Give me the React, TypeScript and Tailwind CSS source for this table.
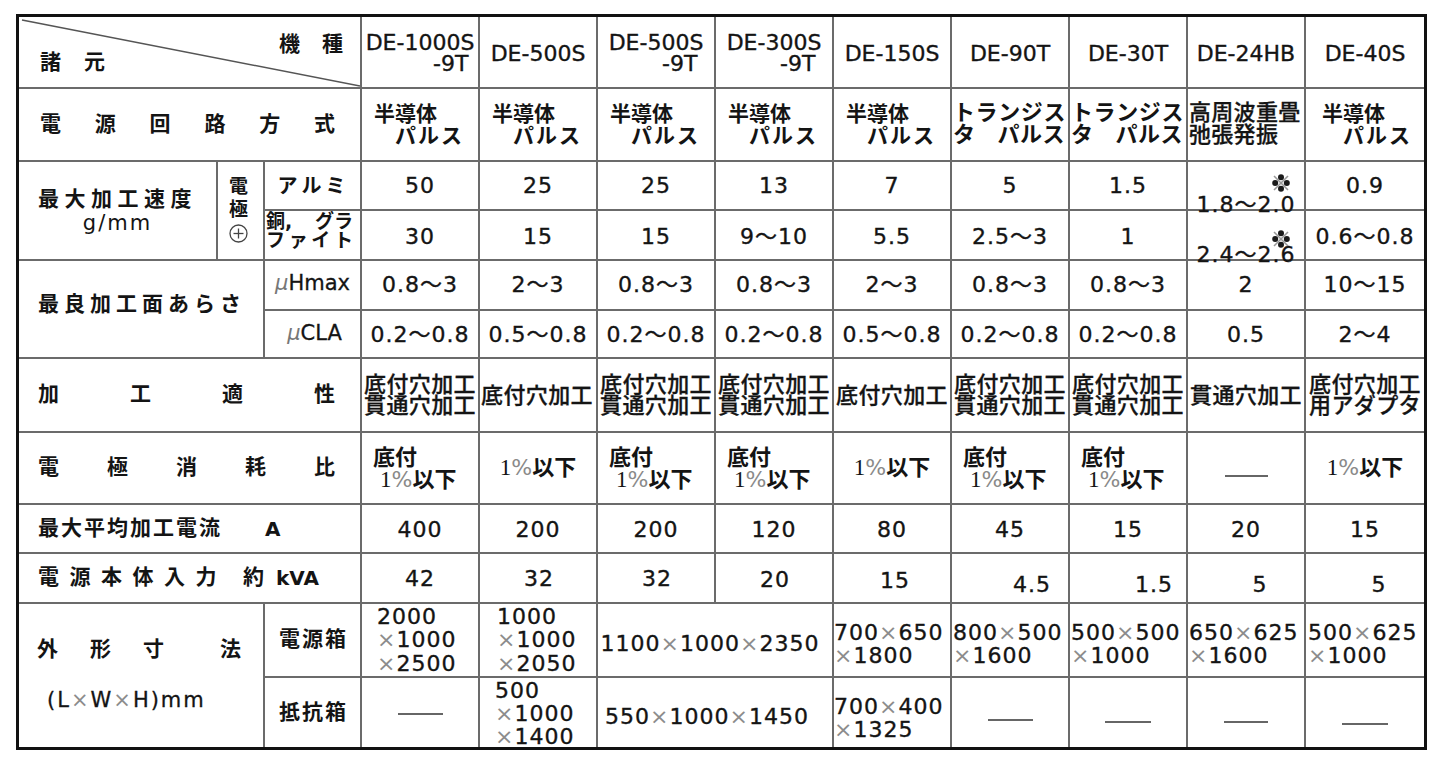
import React from "react";

type CP = { children?: React.ReactNode; layout?: string; r?: boolean; b?: boolean };
function C({ children, layout = "flex items-center justify-center", r = true, b = true }: CP) {
  return (
    <div className={`${r ? "border-r-2" : ""} ${b ? "border-b-2" : ""} border-[#6b6b6b] min-w-0 ${layout}`}>
      {children}
    </div>
  );
}

function X({ s }: { s: string }) {
  const parts = s.split("×");
  return (
    <>
      {parts.map((p, i) => (
        <React.Fragment key={i}>
          {i > 0 && <span className="text-[#8c8c8c] [-webkit-text-stroke:0px]">×</span>}
          {p}
        </React.Fragment>
      ))}
    </>
  );
}

const NUM = "text-[22px] tracking-[1px] leading-[24px] [-webkit-text-stroke:0.35px_#141414]";

function Semi({ pl = "pl-[12px]" }: { pl?: string }) {
  return (
    <div className={`w-full flex flex-col ${pl} font-bold text-[21px] leading-[22px]`}>
      <span>半導体</span>
      <span className="pl-[21px] tracking-[2px]">パルス</span>
    </div>
  );
}

function Trans() {
  return (
    <div className="w-full flex flex-col px-[1px] font-bold text-[22px] leading-[22px] pb-[2px] whitespace-nowrap">
      <span className="tracking-[0.6px]">トランジス</span>
      <span className="flex justify-between pr-[2px]">
        <span>タ</span>
        <span className="tracking-[0.5px]">パルス</span>
      </span>
    </div>
  );
}

function Hf() {
  return (
    <div className="w-full flex flex-col pl-[1px] font-medium text-[22px] leading-[22px] pb-[2px] whitespace-nowrap [-webkit-text-stroke:0.3px_#141414]">
      <span className="tracking-[0.3px]">高周波重畳</span>
      <span className="tracking-[0.3px]">弛張発振</span>
    </div>
  );
}

function Pct() {
  return (
    <span className="font-bold text-[22px] whitespace-nowrap">
      <span className="[font-family:'Liberation_Serif',serif] font-normal text-[23px]">1</span>
      <span className="text-[#8a8a8a] font-normal">%</span>
      以下
    </span>
  );
}

function Pct2() {
  return (
    <div className="w-full flex flex-col pl-[11px] leading-[22px] pt-[4px]">
      <span className="font-bold text-[22px]">底付</span>
      <span className="pl-[7px]">
        <Pct />
      </span>
    </div>
  );
}

function Dash({ w = 45, mt = 0 }: { w?: number; mt?: number }) {
  return <div className="h-[2px] bg-[#666]" style={{ width: w, marginTop: mt }} />;
}

function Mach({ lines }: { lines: string[] }) {
  return (
    <div className="flex flex-col items-center font-medium text-[22px] leading-[21px] tracking-[0.4px] whitespace-nowrap [-webkit-text-stroke:0.3px_#141414]">
      {lines.map((l, i) => (
        <span key={i}>{l}</span>
      ))}
    </div>
  );
}

function Circle() {
  return (
    <svg width="21" height="21" viewBox="0 0 21 21">
      <circle cx="10.5" cy="10.5" r="8.5" fill="none" stroke="#444" strokeWidth="1.3" />
      <line x1="10.5" y1="5.5" x2="10.5" y2="15.5" stroke="#444" strokeWidth="1.3" />
      <line x1="5.5" y1="10.5" x2="15.5" y2="10.5" stroke="#444" strokeWidth="1.3" />
    </svg>
  );
}

function Kome() {
  return (
    <svg width="20" height="20" viewBox="0 0 20 20">
      <line x1="3" y1="3" x2="17" y2="17" stroke="#999" strokeWidth="1.6" />
      <line x1="17" y1="3" x2="3" y2="17" stroke="#999" strokeWidth="1.6" />
      <circle cx="10" cy="4.2" r="3" fill="#1a1a1a" />
      <circle cx="10" cy="15.8" r="3" fill="#1a1a1a" />
      <circle cx="4.2" cy="10" r="3" fill="#1a1a1a" />
      <circle cx="15.8" cy="10" r="3" fill="#1a1a1a" />
    </svg>
  );
}

const models: string[][] = [
  ["DE-1000S", "-9T"],
  ["DE-500S"],
  ["DE-500S", "-9T"],
  ["DE-300S", "-9T"],
  ["DE-150S"],
  ["DE-90T"],
  ["DE-30T"],
  ["DE-24HB"],
  ["DE-40S"],
];

const alum = ["50", "25", "25", "13", "7", "5", "1.5", "HB1", "0.9"];
const copper = ["30", "15", "15", "9〜10", "5.5", "2.5〜3", "1", "HB2", "0.6〜0.8"];
const hmax = ["0.8〜3", "2〜3", "0.8〜3", "0.8〜3", "2〜3", "0.8〜3", "0.8〜3", "2", "10〜15"];
const cla = ["0.2〜0.8", "0.5〜0.8", "0.2〜0.8", "0.2〜0.8", "0.5〜0.8", "0.2〜0.8", "0.2〜0.8", "0.5", "2〜4"];
const current = ["400", "200", "200", "120", "80", "45", "15", "20", "15"];
const power: { v: string; pl: number; pt: number }[] = [
  { v: "42", pl: 0, pt: 2 },
  { v: "32", pl: 2, pt: 2 },
  { v: "32", pl: 2, pt: 2 },
  { v: "20", pl: 2, pt: 4 },
  { v: "15", pl: 6, pt: 6 },
  { v: "4.5", pl: 44, pt: 14 },
  { v: "1.5", pl: 52, pt: 14 },
  { v: "5", pl: 28, pt: 14 },
  { v: "5", pl: 28, pt: 14 },
];

function Spread({ text, pl, pr }: { text: string; pl: string; pr: string }) {
  return (
    <div className={`w-full flex items-center justify-between font-bold text-[21px] ${pl} ${pr}`}>
      {text.split("").map((c, i) => (
        <span key={i}>{c}</span>
      ))}
    </div>
  );
}

function HB({ v, top }: { v: string; top: string }) {
  return (
    <div className="relative w-full h-full flex flex-col items-center justify-end">
      <span className={`absolute right-[13px] ${top} flex`}>
        <Kome />
      </span>
      <span className={`${NUM} translate-y-[8px] whitespace-nowrap`}>{v}</span>
    </div>
  );
}

function Dim({ lines, pl = "pl-0", pt = "pt-0", lh = "leading-[23px]" }: { lines: string[]; pl?: string; pt?: string; lh?: string }) {
  return (
    <div
      className={`w-full h-full flex flex-col justify-center ${pl} ${pt} text-[22px] tracking-[1px] ${lh} whitespace-nowrap [-webkit-text-stroke:0.35px_#141414]`}
    >
      {lines.map((l, i) => (
        <span key={i}>
          <X s={l} />
        </span>
      ))}
    </div>
  );
}

export default function App() {
  return (
    <div className="w-[1444px] h-[758px] bg-white [font-family:'DejaVu_Sans','Noto_Sans_CJK_JP',sans-serif] text-[#141414] overflow-hidden">
      <div className="ml-[16px] mt-[14px] w-fit border-[3px] border-[#111]">
        <div className="grid grid-cols-[199px_47px_97px_repeat(9,118px)] grid-rows-[72px_73px_49px_50px_50px_48px_74px_72px_49px_50px_74px_69px]">
          {/* Row 1: header */}
          <C layout="relative col-span-3 flex flex-col">
            <svg className="absolute left-0 top-0" width="341" height="70" viewBox="0 0 341 70">
              <line x1="3" y1="3" x2="341" y2="69" stroke="#555" strokeWidth="1.6" />
            </svg>
            <div className="relative flex flex-col pt-[16px] font-bold text-[21px] leading-[22px]">
              <div className="self-end pr-[17px]">
                機<span className="ml-[22px]">種</span>
              </div>
              <div className="self-start pl-[21px] -mt-[4px]">
                諸<span className="ml-[23px]">元</span>
              </div>
            </div>
          </C>
          {models.map((m, i) => (
            <C key={i} r={i < 8} layout="flex items-center justify-center pt-[2px]">
              <div className="flex flex-col items-end text-[22px] leading-[21px] whitespace-nowrap [-webkit-text-stroke:0.35px_#141414]">
                <span>{m[0]}</span>
                {m[1] && <span className="pr-[6px]">{m[1]}</span>}
              </div>
            </C>
          ))}

          {/* Row 2 */}
          <C layout="col-span-3 flex items-center">
            <Spread text="電源回路方式" pl="pl-[21px]" pr="pr-[25px]" />
          </C>
          {[0, 1, 2, 3, 4].map((i) => (
            <C key={i} layout="flex items-center">
              <Semi />
            </C>
          ))}
          <C layout="flex items-center">
            <Trans />
          </C>
          <C layout="flex items-center">
            <Trans />
          </C>
          <C layout="flex items-center">
            <Hf />
          </C>
          <C r={false} layout="flex items-center">
            <Semi pl="pl-[16px]" />
          </C>

          {/* Row 3 */}
          <C layout="row-span-2 flex flex-col items-center justify-center">
            <span className="font-bold text-[21px] tracking-[5.5px] leading-[24px] whitespace-nowrap">最大加工速度</span>
            <span className="text-[21px] tracking-[2px] leading-[24px]">g/mm</span>
          </C>
          <C layout="row-span-2 flex flex-col items-center justify-center font-bold text-[19px] leading-[23px] pr-[4px]">
            <span>電</span>
            <span>極</span>
            <span className="h-[25px] flex items-center">
              <Circle />
            </span>
          </C>
          <C layout="flex items-center justify-center pl-[2px] font-bold text-[20px] tracking-[4px]">アルミ</C>
          {alum.map((v, i) => (
            <C key={i} r={i < 8} layout="flex items-center justify-center">
              {v === "HB1" ? <HB v="1.8〜2.0" top="top-[11px]" /> : <span className={NUM}>{v}</span>}
            </C>
          ))}

          {/* Row 4 */}
          <C layout="flex flex-col justify-start pt-[1px] pl-[1px] pr-[7px] font-bold text-[19px] leading-[19px]">
            <span className="flex justify-between">
              <span>銅,</span>
              <span>グラ</span>
            </span>
            <span className="flex justify-between">
              <span>フ</span>
              <span>ァ</span>
              <span>イ</span>
              <span>ト</span>
            </span>
          </C>
          {copper.map((v, i) => (
            <C key={i} r={i < 8} layout="flex items-center justify-center pt-[4px]">
              {v === "HB2" ? <HB v="2.4〜2.6" top="top-[14px]" /> : <span className={NUM}>{v}</span>}
            </C>
          ))}

          {/* Row 5 */}
          <C layout="row-span-2 col-span-2 flex items-center pl-[19px] pb-[8px] font-bold text-[21px] tracking-[5px] whitespace-nowrap">
            最良加工面あらさ
          </C>
          <C layout="flex items-center justify-center text-[21px] pb-[2px] [-webkit-text-stroke:0.3px_#141414]">
            <span className="italic text-[#777] [-webkit-text-stroke:0px]">μ</span>Hmax
          </C>
          {hmax.map((v, i) => (
            <C key={i} r={i < 8} layout="flex items-center justify-center">
              <span className={NUM}>{v}</span>
            </C>
          ))}

          {/* Row 6 */}
          <C layout="flex items-center justify-center text-[21px] pl-[4px] [-webkit-text-stroke:0.3px_#141414]">
            <span className="italic text-[#777] [-webkit-text-stroke:0px]">μ</span>CLA
          </C>
          {cla.map((v, i) => (
            <C key={i} r={i < 8} layout="flex items-center justify-center pt-[2px]">
              <span className={`${NUM} whitespace-nowrap`}>{v}</span>
            </C>
          ))}

          {/* Row 7 */}
          <C layout="col-span-3 flex items-center">
            <Spread text="加工適性" pl="pl-[19px]" pr="pr-[25px]" />
          </C>
          <C layout="flex items-center justify-center">
            <Mach lines={["底付穴加工", "貫通穴加工"]} />
          </C>
          <C layout="flex items-center justify-start pl-[1px]">
            <Mach lines={["底付穴加工"]} />
          </C>
          <C layout="flex items-center justify-center">
            <Mach lines={["底付穴加工", "貫通穴加工"]} />
          </C>
          <C layout="flex items-center justify-center">
            <Mach lines={["底付穴加工", "貫通穴加工"]} />
          </C>
          <C layout="flex items-center justify-center">
            <Mach lines={["底付穴加工"]} />
          </C>
          <C layout="flex items-center justify-center">
            <Mach lines={["底付穴加工", "貫通穴加工"]} />
          </C>
          <C layout="flex items-center justify-center">
            <Mach lines={["底付穴加工", "貫通穴加工"]} />
          </C>
          <C layout="flex items-center justify-center">
            <Mach lines={["貫通穴加工"]} />
          </C>
          <C r={false} layout="flex items-center justify-center">
            <Mach lines={["底付穴加工", "用アダプタ"]} />
          </C>

          {/* Row 8 */}
          <C layout="col-span-3 flex items-center">
            <Spread text="電極消耗比" pl="pl-[19px]" pr="pr-[25px]" />
          </C>
          <C layout="flex items-center">
            <Pct2 />
          </C>
          <C layout="flex items-center justify-center">
            <Pct />
          </C>
          <C layout="flex items-center">
            <Pct2 />
          </C>
          <C layout="flex items-center">
            <Pct2 />
          </C>
          <C layout="flex items-center justify-center">
            <Pct />
          </C>
          <C layout="flex items-center">
            <Pct2 />
          </C>
          <C layout="flex items-center">
            <Pct2 />
          </C>
          <C layout="flex items-center justify-center pt-[16px]">
            <Dash w={43} />
          </C>
          <C r={false} layout="flex items-center justify-center">
            <Pct />
          </C>

          {/* Row 9 */}
          <C layout="col-span-3 flex items-center pl-[19px] font-bold text-[21px]">
            <span className="tracking-[2px] whitespace-nowrap">最大平均加工電流</span>
            <span className="ml-[43px] text-[20px]">A</span>
          </C>
          {current.map((v, i) => (
            <C key={i} r={i < 8} layout="flex items-center justify-center pt-[2px]">
              <span className={NUM}>{v}</span>
            </C>
          ))}

          {/* Row 10 */}
          <C layout="col-span-3 flex items-center pl-[19px] font-bold text-[21px]">
            <span className="tracking-[10.5px] whitespace-nowrap">電源本体入力</span>
            <span className="ml-[16px]">約</span>
            <span className="ml-[12px] text-[20px]">kVA</span>
          </C>
          {power.map((p, i) => (
            <C key={i} r={i < 8} layout="flex items-center justify-center">
              <span className={NUM} style={{ paddingLeft: p.pl, paddingTop: p.pt }}>
                {p.v}
              </span>
            </C>
          ))}

          {/* Row 11 */}
          <C b={false} layout="row-span-2 col-span-2 flex flex-col justify-center gap-[27px] pb-[2px]">
            <div className="flex pl-[18px] font-bold text-[21px] leading-[24px]">
              <span>外</span>
              <span className="ml-[32px]">形</span>
              <span className="ml-[32px]">寸</span>
              <span className="ml-[56px]">法</span>
            </div>
            <div className="pl-[28px] text-[21px] tracking-[2px] leading-[24px] [-webkit-text-stroke:0.3px_#141414]">
              (L<span className="text-[#8c8c8c] [-webkit-text-stroke:0px]">×</span>W
              <span className="text-[#8c8c8c] [-webkit-text-stroke:0px]">×</span>H)mm
            </div>
          </C>
          <C layout="flex items-center justify-center font-bold text-[21px] tracking-[2px] pl-[2px]">電源箱</C>
          <C layout="flex">
            <Dim lines={["2000", "×1000", "×2500"]} pl="pl-[15px]" lh="leading-[23.5px]" />
          </C>
          <C layout="flex">
            <Dim lines={["1000", "×1000", "×2050"]} pl="pl-[17px]" lh="leading-[23.5px]" />
          </C>
          <C layout="col-span-2 flex items-center justify-center pt-[6px] pr-[10px]">
            <span className="text-[22px] tracking-[1px] whitespace-nowrap [-webkit-text-stroke:0.35px_#141414]">
              <X s="1100×1000×2350" />
            </span>
          </C>
          <C layout="flex">
            <Dim lines={["700×650", "×1800"]} pt="pt-[8px]" />
          </C>
          <C layout="flex">
            <Dim lines={["800×500", "×1600"]} pl="pl-[1px]" pt="pt-[8px]" />
          </C>
          <C layout="flex">
            <Dim lines={["500×500", "×1000"]} pl="pl-[1px]" pt="pt-[8px]" />
          </C>
          <C layout="flex">
            <Dim lines={["650×625", "×1600"]} pl="pl-[1px]" pt="pt-[8px]" />
          </C>
          <C r={false} layout="flex">
            <Dim lines={["500×625", "×1000"]} pl="pl-[2px]" pt="pt-[8px]" />
          </C>

          {/* Row 12 */}
          <C b={false} layout="flex items-center justify-center font-bold text-[21px] tracking-[2px] pl-[2px]">抵抗箱</C>
          <C b={false} layout="flex items-center justify-center">
            <Dash w={45} mt={2} />
          </C>
          <C b={false} layout="flex">
            <Dim lines={["500", "×1000", "×1400"]} pl="pl-[15px]" pt="pt-[2px]" />
          </C>
          <C b={false} layout="col-span-2 flex items-center justify-center pt-[8px] pr-[16px]">
            <span className="text-[22px] tracking-[1px] whitespace-nowrap [-webkit-text-stroke:0.35px_#141414]">
              <X s="550×1000×1450" />
            </span>
          </C>
          <C b={false} layout="flex">
            <Dim lines={["700×400", "×1325"]} pt="pt-[10px]" />
          </C>
          <C b={false} layout="flex items-center justify-center">
            <Dash w={45} mt={14} />
          </C>
          <C b={false} layout="flex items-center justify-center">
            <Dash w={46} mt={18} />
          </C>
          <C b={false} layout="flex items-center justify-center">
            <Dash w={44} mt={18} />
          </C>
          <C r={false} b={false} layout="flex items-center justify-center">
            <Dash w={46} mt={22} />
          </C>
        </div>
      </div>
    </div>
  );
}
